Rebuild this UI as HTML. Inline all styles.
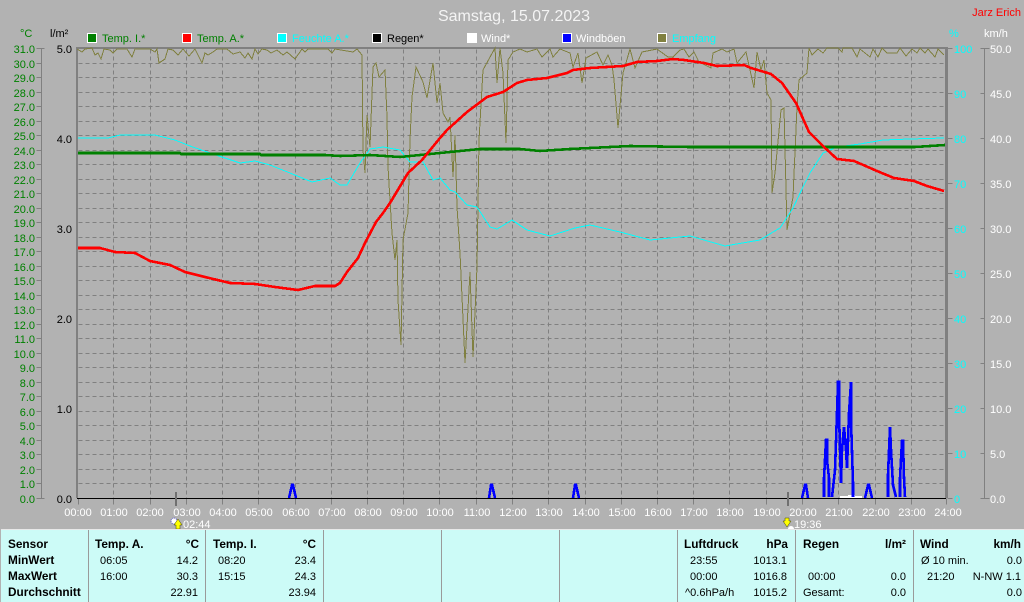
<!DOCTYPE html>
<html><head><meta charset="utf-8"><title>Samstag, 15.07.2023</title>
<style>
html,body{margin:0;padding:0;background:#b2b2b2;width:1024px;height:602px;overflow:hidden}
svg{display:block;position:absolute;left:0;top:0}
text{font-family:"Liberation Sans",sans-serif;font-size:11px}
.g text{fill:#008000}
.k text{fill:#000}
.c text{fill:#00ffff}
.w text{fill:#fff}
.t text{fill:#000;font-size:11px}
.t .b{font-weight:bold;font-size:11.8px}
.e{text-anchor:end}
.m{text-anchor:middle}
.l{shape-rendering:crispEdges;fill:none}
</style></head><body>
<svg width="1024" height="602" viewBox="0 0 1024 602" xmlns="http://www.w3.org/2000/svg">
<rect width="1024" height="602" fill="#b2b2b2"/>
<g transform="translate(.5,.5)">
<!-- grid -->
<path class="l" stroke="#808080" stroke-dasharray="4 3" d="M78 63H945M78 77H945M78 92H945M78 106H945M78 121H945M78 135H945M78 150H945M78 164H945M78 179H945M78 193H945M78 208H945M78 222H945M78 237H945M78 251H945M78 266H945M78 280H945M78 295H945M78 309H945M78 324H945M78 338H945M78 353H945M78 367H945M78 382H945M78 396H945M78 411H945M78 425H945M78 440H945M78 454H945M78 469H945M78 483H945"/>
<path class="l" stroke="#808080" stroke-dasharray="4 3" d="M113 49V498M150 49V498M186 49V498M222 49V498M258 49V498M295 49V498M331 49V498M367 49V498M403 49V498M439 49V498M476 49V498M512 49V498M548 49V498M585 49V498M621 49V498M657 49V498M693 49V498M729 49V498M766 49V498M802 49V498M838 49V498M875 49V498M911 49V498"/>
<!-- hour ticks -->
<path class="l" stroke="#808080" d="M78 498V504M113 498V504M150 498V504M186 498V504M222 498V504M258 498V504M295 498V504M331 498V504M367 498V504M403 498V504M439 498V504M476 498V504M512 498V504M548 498V504M585 498V504M621 498V504M657 498V504M693 498V504M729 498V504M766 498V504M802 498V504M838 498V504M875 498V504M911 498V504M946 498V504"/>
<path class="l" stroke="#808080" d="M41 48V498M36 48H44M36 63H41M36 77H41M36 92H41M36 106H41M36 121H41M36 135H41M36 150H41M36 164H41M36 179H41M36 193H41M36 208H41M36 222H41M36 237H41M36 251H41M36 266H41M36 280H41M36 295H41M36 309H41M36 324H41M36 338H41M36 353H41M36 367H41M36 382H41M36 396H41M36 411H41M36 425H41M36 440H41M36 454H41M36 469H41M36 483H41M36 498H44"/>
<path class="l" stroke="#808080" d="M984 48V498M980 48H989M980 93H984M980 138H984M980 183H984M980 228H984M980 273H984M980 318H984M980 363H984M980 408H984M980 453H984M980 498H989M947 48H952M947 93H952M947 138H952M947 183H952M947 228H952M947 273H952M947 318H952M947 363H952M947 408H952M947 453H952M947 498H952"/>
</g>
<!-- axes -->
<rect x="77" y="47" width="870" height="2" fill="#808080"/>
<rect x="76" y="47" width="2" height="451" fill="#808080"/>
<rect x="945" y="47" width="3" height="451" fill="#808080"/>
<!-- Empfang -->
<polyline class="l" stroke="#808040" points="77,49 82,52 85,49 92,48 95,55 98,53 101,59 104,49 110,50 113,53 117,49 127,49 132,57 135,49 150,49 155,52 157,49 159,63 165,59 168,49 173,50 178,55 183,49 189,56 195,49 202,63 205,53 208,55 213,52 217,49 227,49 233,54 240,52 245,58 248,53 252,59 255,49 258,54 262,49 267,50 271,53 277,50 283,55 287,52 295,59 302,49 305,52 308,49 328,49 332,53 335,49 353,52 357,49 362,55 363,150 365,173 367,115 370,147 373,67 376,63 379,77 385,70 387,117 388,167 392,233 395,260 397,240 398,300 401,345 403,240 408,213 410,140 412,97 416,67 423,82 427,98 433,63 437,103 440,83 443,113 448,122 450,117 453,177 455,135 457,207 460,253 465,363 470,272 473,357 477,267 479,140 483,70 495,48 497,83 500,48 503,73 506,143 508,60 513,52 520,49 527,52 537,49 542,57 550,49 553,57 560,49 570,53 573,67 578,53 582,83 586,58 597,52 603,65 608,55 612,65 614,80 618,128 623,73 630,49 635,68 642,52 657,49 668,57 673,57 680,50 684,49 689,57 694,52 699,62 711,68 713,53 722,49 727,52 734,49 737,63 746,52 754,88 757,52 761,70 764,60 767,93 771,100 772,193 775,173 781,110 784,108 787,230 793,197 797,107 799,80 807,73 809,48 812,55 818,49 823,53 827,48 838,48 842,52 843,48 852,48 857,57 860,49 870,57 873,49 878,57 882,48 887,53 897,53 900,48 906,56 912,49 917,53 920,48 925,53 928,49 935,57 938,49 944,55"/>
<!-- Feuchte -->
<polyline class="l" stroke="#00ffff" points="78,138 108,138 120,135 148,135 155,135 175,140 190,146 210,153 240,163 255,161 270,165 290,173 312,182 330,178 340,185 347,185 360,163 370,149 383,147 400,150 410,162 423,162 433,180 440,178 450,190 455,192 467,205 477,207 490,227 497,229 512,220 527,230 550,236 575,228 590,225 620,232 650,240 690,236 725,246 760,240 773,232 780,228 793,208 803,187 810,173 823,153 837,147 860,144 883,140 910,139 944,138"/>
<!-- Temp I -->
<polyline class="l" stroke="#008000" stroke-width="2.6" points="78,153 180,153 181,154 260,154 261,155 325,155 340,156 370,155 400,157 420,155 450,152 480,149 520,149 540,151 570,149 630,146 690,147 710,147 780,147 915,147 930,146 945,145"/>
<!-- Temp A -->
<polyline class="l" stroke="#ff0000" stroke-width="2.6" points="78,248 100,248 115,252 135,253 150,261 170,265 185,272 205,277 230,283 255,284 275,287 298,290 315,286 335,286 340,283 347,272 358,258 365,243 376,222 383,213 390,203 402,183 408,173 422,160 440,138 447,130 467,112 487,97 503,92 517,83 527,80 547,78 567,73 573,70 590,68 623,66 637,62 657,61 673,59 684,60 704,63 717,66 744,65 751,68 771,74 782,83 796,103 809,132 824,147 837,159 854,161 861,164 877,171 894,178 914,181 927,186 944,191"/>
<!-- Wind -->
<path class="l" stroke="#ffffff" stroke-width="2" d="M840 497H862M848 496H855"/>
<!-- baseline -->
<rect x="77" y="498" width="869" height="1" fill="#000"/>
<!-- Windböen -->
<g class="l" stroke="#0000ff" stroke-width="2.6" stroke-linejoin="miter">
<polyline points="289,498 292,485 293,485 296,498"/>
<polyline points="489,498 491,485 492,485 495,498"/>
<polyline points="573,498 575,485 576,485 579,498"/>
<polyline points="802,498 805,485 806,485 808,498"/>
<polyline points="824,497 824,478 825,460 826,440 827,440 827,460 829,478 829,497"/>
<polyline points="832,497 833,488 835,470 837,413 838,382 839,382 839,413 841,483 842,450 844,427 846,450 847,468 849,413 851,382 851,420 853,483 853,497"/>
<polyline points="865,498 868,485 869,485 872,498"/>
<polyline points="888,497 888,475 890,427 891,450 893,485 896,497"/>
<polyline points="900,497 900,478 902,441 903,441 904,478 905,497"/>
</g>
<!-- sun marks -->
<rect x="175" y="492" width="2" height="14" fill="#707070"/>
<rect x="787" y="492" width="2" height="14" fill="#707070"/>
<circle cx="174" cy="521" r="3" fill="#fff" stroke="#5a5ac8" stroke-width="1" stroke-dasharray="1 1"/>
<path d="M178 519L182 525H180V529H176V525H174Z" fill="#ffff00" stroke="#404000" stroke-width=".5"/>
<path d="M787 527L783 521H785V518H789V521H791Z" fill="#ffff00" stroke="#404000" stroke-width=".5"/>
<circle cx="791" cy="529" r="3" fill="#fff"/>
<!-- Title -->
<text x="514" y="21" class="m" style="font-size:16px" fill="#f4f4f4">Samstag, 15.07.2023</text>
<text x="1021" y="16" class="e" fill="#ff0000">Jarz Erich</text>
<!-- Legend -->
<g stroke="#fff" stroke-width="1">
<rect x="87.5" y="33.5" width="9" height="9" fill="#008000"/>
<rect x="182.5" y="33.5" width="9" height="9" fill="#ff0000"/>
<rect x="277.5" y="33.5" width="9" height="9" fill="#00ffff"/>
<rect x="372.5" y="33.5" width="9" height="9" fill="#000"/>
<rect x="467.5" y="33.5" width="9" height="9" fill="#fff"/>
<rect x="562.5" y="33.5" width="9" height="9" fill="#0000ff"/>
<rect x="657.5" y="33.5" width="9" height="9" fill="#808040"/>
</g>
<text x="102" y="42" fill="#008000">Temp. I.*</text>
<text x="197" y="42" fill="#008000">Temp. A.*</text>
<text x="292" y="42" fill="#00ffff">Feuchte A.*</text>
<text x="387" y="42" fill="#000">Regen*</text>
<text x="481" y="42" fill="#fff">Wind*</text>
<text x="576" y="42" fill="#fff">Windböen</text>
<text x="672" y="42" fill="#00ffff">Empfang</text>
<!-- units -->
<text x="20" y="37" fill="#008000">°C</text>
<text x="50" y="37" fill="#000">l/m²</text>
<text x="949" y="37" fill="#00ffff">%</text>
<text x="984" y="37" fill="#fff">km/h</text>
<!-- temp labels -->
<g class="g">
<text class="e" x="35" y="53">31.0</text><text class="e" x="35" y="68">30.0</text><text class="e" x="35" y="82">29.0</text><text class="e" x="35" y="97">28.0</text><text class="e" x="35" y="111">27.0</text><text class="e" x="35" y="126">26.0</text><text class="e" x="35" y="140">25.0</text><text class="e" x="35" y="155">24.0</text><text class="e" x="35" y="169">23.0</text><text class="e" x="35" y="184">22.0</text><text class="e" x="35" y="198">21.0</text><text class="e" x="35" y="213">20.0</text><text class="e" x="35" y="227">19.0</text><text class="e" x="35" y="242">18.0</text><text class="e" x="35" y="256">17.0</text><text class="e" x="35" y="271">16.0</text><text class="e" x="35" y="285">15.0</text><text class="e" x="35" y="300">14.0</text><text class="e" x="35" y="314">13.0</text><text class="e" x="35" y="329">12.0</text><text class="e" x="35" y="343">11.0</text><text class="e" x="35" y="358">10.0</text><text class="e" x="35" y="372">9.0</text><text class="e" x="35" y="387">8.0</text><text class="e" x="35" y="401">7.0</text><text class="e" x="35" y="416">6.0</text><text class="e" x="35" y="430">5.0</text><text class="e" x="35" y="445">4.0</text><text class="e" x="35" y="459">3.0</text><text class="e" x="35" y="474">2.0</text><text class="e" x="35" y="488">1.0</text><text class="e" x="35" y="503">0.0</text>
</g>
<g class="k">
<text class="e" x="72" y="53">5.0</text><text class="e" x="72" y="143">4.0</text><text class="e" x="72" y="233">3.0</text><text class="e" x="72" y="323">2.0</text><text class="e" x="72" y="413">1.0</text><text class="e" x="72" y="503">0.0</text>
</g>
<g class="c">
<text x="954" y="53">100</text><text x="954" y="98">90</text><text x="954" y="143">80</text><text x="954" y="188">70</text><text x="954" y="233">60</text><text x="954" y="278">50</text><text x="954" y="323">40</text><text x="954" y="368">30</text><text x="954" y="413">20</text><text x="954" y="458">10</text><text x="954" y="503">0</text>
</g>
<g class="w">
<text x="990" y="53">50.0</text><text x="990" y="98">45.0</text><text x="990" y="143">40.0</text><text x="990" y="188">35.0</text><text x="990" y="233">30.0</text><text x="990" y="278">25.0</text><text x="990" y="323">20.0</text><text x="990" y="368">15.0</text><text x="990" y="413">10.0</text><text x="990" y="458">5.0</text><text x="990" y="503">0.0</text>
</g>
<!-- hours -->
<g class="w">
<text class="m" x="78" y="516">00:00</text><text class="m" x="114" y="516">01:00</text><text class="m" x="150" y="516">02:00</text><text class="m" x="187" y="516">03:00</text><text class="m" x="223" y="516">04:00</text><text class="m" x="259" y="516">05:00</text><text class="m" x="296" y="516">06:00</text><text class="m" x="332" y="516">07:00</text><text class="m" x="368" y="516">08:00</text><text class="m" x="404" y="516">09:00</text><text class="m" x="440" y="516">10:00</text><text class="m" x="477" y="516">11:00</text><text class="m" x="513" y="516">12:00</text><text class="m" x="549" y="516">13:00</text><text class="m" x="586" y="516">14:00</text><text class="m" x="622" y="516">15:00</text><text class="m" x="658" y="516">16:00</text><text class="m" x="694" y="516">17:00</text><text class="m" x="730" y="516">18:00</text><text class="m" x="767" y="516">19:00</text><text class="m" x="803" y="516">20:00</text><text class="m" x="839" y="516">21:00</text><text class="m" x="876" y="516">22:00</text><text class="m" x="912" y="516">23:00</text><text class="m" x="948" y="516">24:00</text>
<text x="183" y="528">02:44</text><text x="794" y="528">19:36</text>
</g>
<!-- table -->
<rect x="1" y="529" width="1023" height="1" fill="#e8e8e8"/>
<rect x="1" y="530" width="1023" height="72" fill="#ccfbf7"/>
<path class="l" stroke="#9a9a9a" d="M88.5 530V602M205.5 530V602M323.5 530V602M441.5 530V602M559.5 530V602M677.5 530V602M795.5 530V602M913.5 530V602"/>
<g class="t">
<text class="b" x="8" y="548">Sensor</text><text class="b" x="8" y="564">MinWert</text><text class="b" x="8" y="580">MaxWert</text><text class="b" x="8" y="596">Durchschnitt</text>
<text class="b" x="95" y="548">Temp. A.</text><text class="b e" x="199" y="548">°C</text>
<text x="100" y="564">06:05</text><text class="e" x="198" y="564">14.2</text>
<text x="100" y="580">16:00</text><text class="e" x="198" y="580">30.3</text>
<text class="e" x="198" y="596">22.91</text>
<text class="b" x="213" y="548">Temp. I.</text><text class="b e" x="316" y="548">°C</text>
<text x="218" y="564">08:20</text><text class="e" x="316" y="564">23.4</text>
<text x="218" y="580">15:15</text><text class="e" x="316" y="580">24.3</text>
<text class="e" x="316" y="596">23.94</text>
<text class="b" x="684" y="548">Luftdruck</text><text class="b e" x="788" y="548">hPa</text>
<text x="690" y="564">23:55</text><text class="e" x="787" y="564">1013.1</text>
<text x="690" y="580">00:00</text><text class="e" x="787" y="580">1016.8</text>
<text x="685" y="596">^0.6hPa/h</text><text class="e" x="787" y="596">1015.2</text>
<text class="b" x="803" y="548">Regen</text><text class="b e" x="906" y="548">l/m²</text>
<text x="808" y="580">00:00</text><text class="e" x="906" y="580">0.0</text>
<text x="803" y="596">Gesamt:</text><text class="e" x="906" y="596">0.0</text>
<text class="b" x="920" y="548">Wind</text><text class="b e" x="1021" y="548">km/h</text>
<text x="921" y="564">Ø 10 min.</text><text class="e" x="1022" y="564">0.0</text>
<text x="927" y="580">21:20</text><text class="e" x="1021" y="580">N-NW 1.1</text>
<text class="e" x="1022" y="596">0.0</text>
</g>
</svg>
</body></html>
